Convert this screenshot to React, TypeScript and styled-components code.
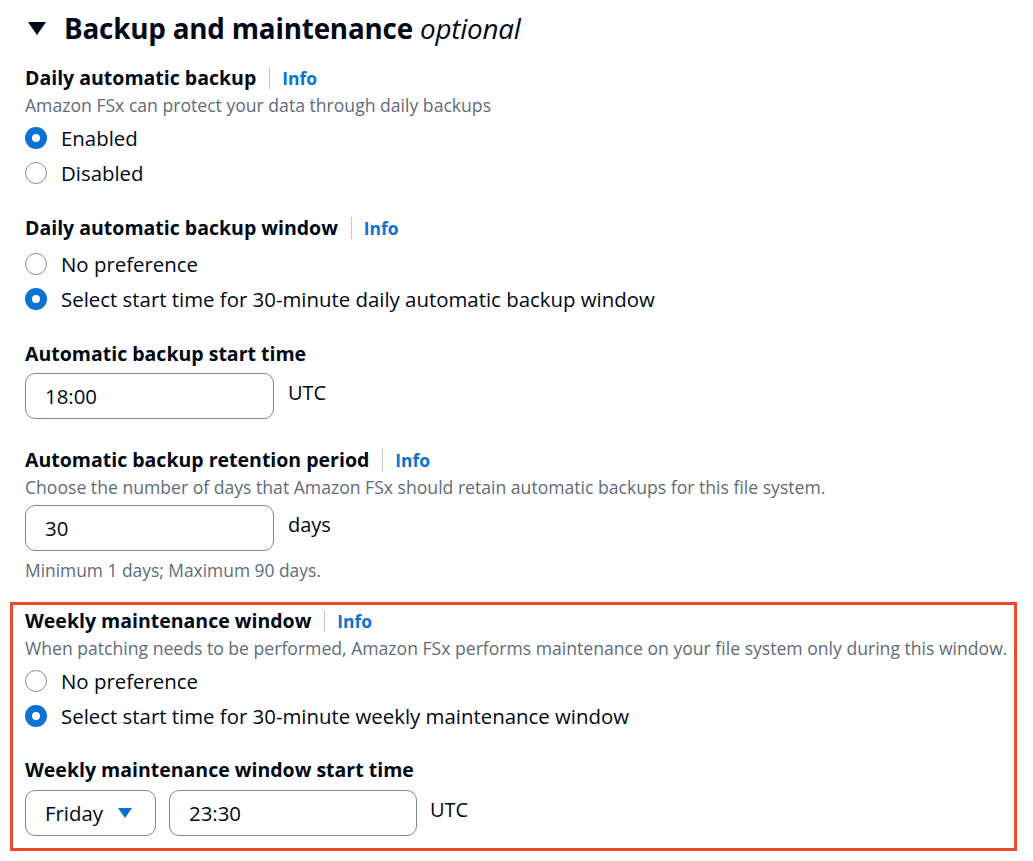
import React from 'react';
import styled, { createGlobalStyle } from 'styled-components';

const GlobalStyle = createGlobalStyle`
  html, body {
    margin: 0;
    padding: 0;
    background: #ffffff;
  }
  body {
    font-family: "Open Sans", "Noto Sans", Arial, sans-serif;
    color: #000716;
  }
`;

const Page = styled.div`
  width: 1033px;
  padding: 8px 16px 0 10px;
  box-sizing: border-box;
`;

const Header = styled.h2`
  display: flex;
  align-items: center;
  gap: 18px;
  margin: 0 0 17px 15px;
  height: 40px;
  font-size: 27.8px;
  font-weight: 700;
  letter-spacing: -0.2px;
  color: #000716;
`;

const Caret = styled.span`
  width: 0;
  height: 0;
  border-left: 9px solid transparent;
  border-right: 9px solid transparent;
  border-top: 13px solid #000716;
  margin-left: 3px;
`;

const Optional = styled.i`
  font-weight: 400;
`;

const Field = styled.div<{ $gap?: number; $inset?: number }>`
  display: flex;
  flex-direction: column;
  padding-left: ${(p) => p.$inset ?? 15}px;
  margin-bottom: ${(p) => p.$gap ?? 25}px;
`;

const LabelRow = styled.div`
  display: flex;
  align-items: center;
  height: 26px;
  margin-bottom: 2px;
`;

const Label = styled.span`
  font-size: 19.5px;
  font-weight: 700;
  line-height: 26px;
`;

const Divider = styled.span`
  width: 1px;
  height: 22px;
  background: #c6c6cd;
  margin: 0 12px 0 13px;
`;

const InfoLink = styled.a`
  font-size: 17.4px;
  font-weight: 700;
  color: #0972d3;
  text-decoration: none;
  line-height: 26px;
`;

const Description = styled.div`
  font-size: 17.6px;
  line-height: 24px;
  color: #5f6b7a;
  white-space: nowrap;
`;

const RadioGroup = styled.div`
  display: flex;
  flex-direction: column;
  margin-top: 3px;
`;

const RadioRow = styled.label`
  display: flex;
  align-items: center;
  height: 35px;
  gap: 14px;
  font-size: 20.4px;
  color: #000716;
`;

const RadioDot = styled.span<{ $checked?: boolean }>`
  width: 22px;
  height: 22px;
  box-sizing: border-box;
  border-radius: 50%;
  flex: none;
  border: ${(p) => (p.$checked ? '7px solid #0972d3' : '1.5px solid #8c8c94')};
  background: #ffffff;
`;

const InputRow = styled.div<{ $gap?: number; $top?: number }>`
  display: flex;
  align-items: flex-start;
  gap: ${(p) => p.$gap ?? 14}px;
  margin-top: ${(p) => p.$top ?? 4}px;
`;

const TextBox = styled.div<{ $width: number }>`
  width: ${(p) => p.$width}px;
  height: 46px;
  box-sizing: border-box;
  border: 1px solid #7d8998;
  border-radius: 10px;
  display: flex;
  align-items: center;
  padding: 0 19px;
  font-size: 20.4px;
  color: #000716;
`;

const SelectBox = styled(TextBox)`
  justify-content: space-between;
  padding-right: 23px;
`;

const SelectCaret = styled.span`
  width: 0;
  height: 0;
  border-left: 7px solid transparent;
  border-right: 7px solid transparent;
  border-top: 10px solid #0972d3;
`;

const Unit = styled.span`
  font-size: 20px;
  line-height: 40px;
  color: #000716;
`;

const Constraint = styled.div`
  font-size: 17.4px;
  line-height: 24px;
  color: #5f6b7a;
  margin-top: 7px;
`;

const Highlight = styled.div`
  border: 3px solid #ec4a2c;
  padding: 3px 0 12px 0;
  margin-top: 20px;
`;

const Spacer = styled.div`
  height: 24px;
`;

type Option = { label: string; checked?: boolean };

function Radios({ options }: { options: Option[] }) {
  return (
    <RadioGroup>
      {options.map((o) => (
        <RadioRow key={o.label}>
          <RadioDot $checked={o.checked} />
          {o.label}
        </RadioRow>
      ))}
    </RadioGroup>
  );
}

function FieldLabel({ text, info }: { text: string; info?: boolean }) {
  return (
    <LabelRow>
      <Label>{text}</Label>
      {info && (
        <>
          <Divider />
          <InfoLink href="#">Info</InfoLink>
        </>
      )}
    </LabelRow>
  );
}

export default function App() {
  return (
    <>
      <GlobalStyle />
      <Page>
        <Header>
          <Caret />
          <span>
            Backup and maintenance <Optional>optional</Optional>
          </span>
        </Header>

        <Field>
          <FieldLabel text="Daily automatic backup" info />
          <Description>Amazon FSx can protect your data through daily backups</Description>
          <Radios options={[{ label: 'Enabled', checked: true }, { label: 'Disabled' }]} />
        </Field>

        <Field>
          <FieldLabel text="Daily automatic backup window" info />
          <Radios
            options={[
              { label: 'No preference' },
              { label: 'Select start time for 30-minute daily automatic backup window', checked: true },
            ]}
          />
        </Field>

        <Field $gap={28}>
          <FieldLabel text="Automatic backup start time" />
          <InputRow>
            <TextBox $width={249}>18:00</TextBox>
            <Unit>UTC</Unit>
          </InputRow>
        </Field>

        <Field $gap={0}>
          <FieldLabel text="Automatic backup retention period" info />
          <Description>
            Choose the number of days that Amazon FSx should retain automatic backups for this file system.
          </Description>
          <InputRow $top={6}>
            <TextBox $width={249}>30</TextBox>
            <Unit>days</Unit>
          </InputRow>
          <Constraint>Minimum 1 days; Maximum 90 days.</Constraint>
        </Field>

        <Highlight>
          <Field $gap={0} $inset={12}>
            <FieldLabel text="Weekly maintenance window" info />
            <Description>
              When patching needs to be performed, Amazon FSx performs maintenance on your file system only during this window.
            </Description>
            <Radios
              options={[
                { label: 'No preference' },
                { label: 'Select start time for 30-minute weekly maintenance window', checked: true },
              ]}
            />
            <Spacer />
            <FieldLabel text="Weekly maintenance window start time" />
            <InputRow $gap={13} $top={5}>
              <SelectBox $width={131}>
                Friday
                <SelectCaret />
              </SelectBox>
              <TextBox $width={248}>23:30</TextBox>
              <Unit>UTC</Unit>
            </InputRow>
          </Field>
        </Highlight>
      </Page>
    </>
  );
}
